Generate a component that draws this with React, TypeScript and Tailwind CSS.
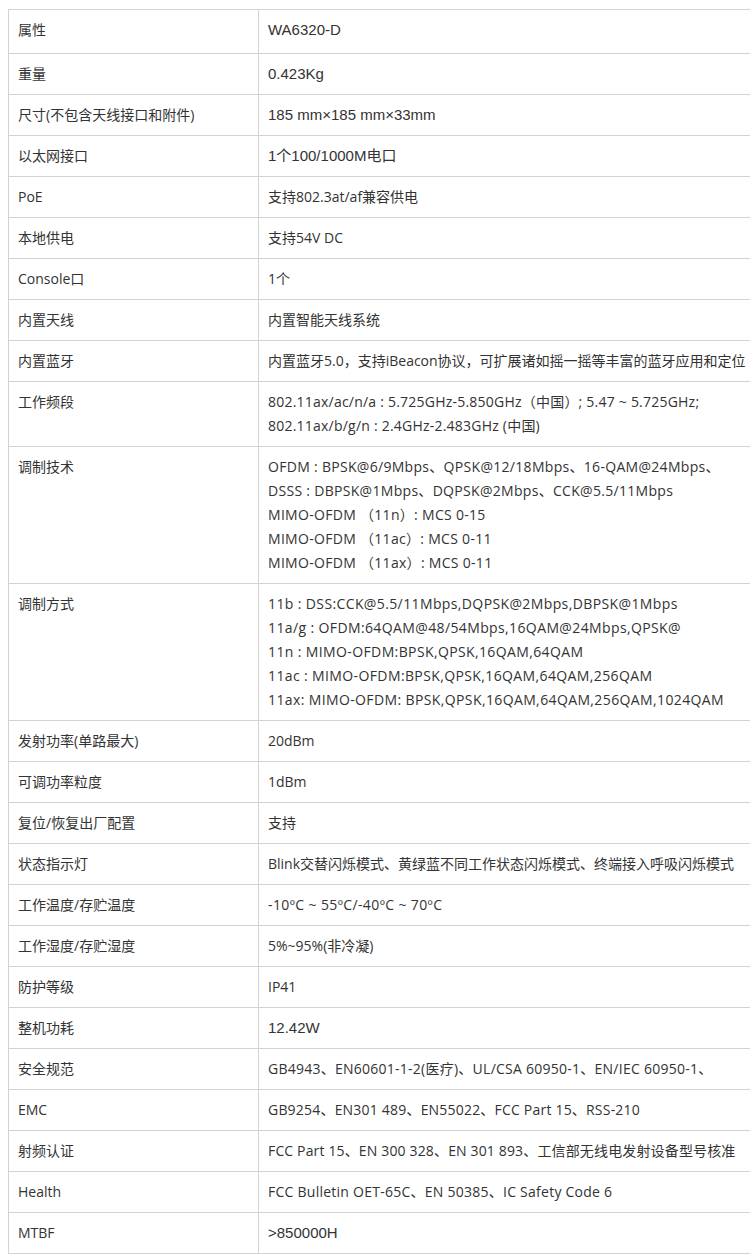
import React from 'react';

type Row = { label: string; lines: string[]; arial?: boolean; first?: boolean; wide?: string };

const rows: Row[] = [
  { label: '属性', lines: ['WA6320-D'], arial: true, first: true },
  { label: '重量', lines: ['0.423Kg'], arial: true },
  { label: '尺寸(不包含天线接口和附件)', lines: ['185 mm×185 mm×33mm'], arial: true },
  { label: '以太网接口', lines: ['1个100/1000M电口'], arial: true },
  { label: 'PoE', lines: ['支持802.3at/af兼容供电'] },
  { label: '本地供电', lines: ['支持54V DC'] },
  { label: 'Console口', lines: ['1个'] },
  { label: '内置天线', lines: ['内置智能天线系统'] },
  { label: '内置蓝牙', lines: ['内置蓝牙5.0，支持iBeacon协议，可扩展诸如摇一摇等丰富的蓝牙应用和定位'] },
  {
    label: '工作频段',
    lines: [
      '802.11ax/ac/n/a : 5.725GHz-5.850GHz（中国）; 5.47 ~ 5.725GHz;',
      '802.11ax/b/g/n : 2.4GHz-2.483GHz (中国)',
    ],
    wide: 'tracking-[0.22px]',
  },
  {
    label: '调制技术',
    lines: [
      'OFDM : BPSK@6/9Mbps、QPSK@12/18Mbps、16-QAM@24Mbps、',
      'DSSS : DBPSK@1Mbps、DQPSK@2Mbps、CCK@5.5/11Mbps',
      'MIMO-OFDM （11n）: MCS 0-15',
      'MIMO-OFDM （11ac）: MCS 0-11',
      'MIMO-OFDM （11ax）: MCS 0-11',
    ],
    wide: 'tracking-[0.3px]',
  },
  {
    label: '调制方式',
    lines: [
      '11b : DSS:CCK@5.5/11Mbps,DQPSK@2Mbps,DBPSK@1Mbps',
      '11a/g : OFDM:64QAM@48/54Mbps,16QAM@24Mbps,QPSK@',
      '11n : MIMO-OFDM:BPSK,QPSK,16QAM,64QAM',
      '11ac : MIMO-OFDM:BPSK,QPSK,16QAM,64QAM,256QAM',
      '11ax: MIMO-OFDM: BPSK,QPSK,16QAM,64QAM,256QAM,1024QAM',
    ],
    wide: 'tracking-[0.38px]',
  },
  { label: '发射功率(单路最大)', lines: ['20dBm'] },
  { label: '可调功率粒度', lines: ['1dBm'] },
  { label: '复位/恢复出厂配置', lines: ['支持'] },
  { label: '状态指示灯', lines: ['Blink交替闪烁模式、黄绿蓝不同工作状态闪烁模式、终端接入呼吸闪烁模式'] },
  { label: '工作温度/存贮温度', lines: ['-10ºC ~ 55ºC/-40ºC ~ 70ºC'], wide: 'tracking-[0.38px]' },
  { label: '工作湿度/存贮湿度', lines: ['5%~95%(非冷凝)'] },
  { label: '防护等级', lines: ['IP41'] },
  { label: '整机功耗', lines: ['12.42W'], arial: true },
  {
    label: '安全规范',
    lines: ['GB4943、EN60601-1-2(医疗)、UL/CSA 60950-1、EN/IEC 60950-1、'],
    wide: 'tracking-[0.25px]',
  },
  { label: 'EMC', lines: ['GB9254、EN301 489、EN55022、FCC Part 15、RSS-210'], wide: 'tracking-[0.2px]' },
  {
    label: '射频认证',
    lines: ['FCC Part 15、EN 300 328、EN 301 893、工信部无线电发射设备型号核准'],
    wide: 'tracking-[0.15px]',
  },
  {
    label: 'Health',
    lines: ['FCC Bulletin OET-65C、EN 50385、IC Safety Code 6'],
    wide: 'tracking-[0.25px]',
  },
  { label: 'MTBF', lines: ['>850000H'], arial: true },
];

const sans = "font-['Open_Sans','Noto_Sans_CJK_SC',sans-serif]";
const arial = "font-['Liberation_Sans','Noto_Sans_CJK_SC',sans-serif] text-[15px]";

export default function App() {
  return (
    <div className="w-[750px] h-[1260px] overflow-hidden bg-white pl-2 pt-[9px]">
      <div className="w-[770px] border-t border-l border-[#d3d3d3] text-[14px] leading-[24px] text-[#333]">
        {rows.map((r) => (
          <div
            key={r.label}
            className="grid grid-cols-[250px_1fr] border-b border-[#d3d3d3]"
          >
            <div
              className={`${sans} border-r border-[#d3d3d3] pl-[9px] whitespace-nowrap ${
                r.first ? 'pt-2 pb-[11px]' : 'py-2'
              }`}
            >
              {r.label}
            </div>
            <div
              className={`${r.arial ? arial : sans} ${r.wide ?? ''} pl-[9px] whitespace-nowrap ${
                r.first ? 'pt-2 pb-[11px]' : 'py-2'
              }`}
            >
              {r.lines.map((l, i) => (
                <div key={i}>{l}</div>
              ))}
            </div>
          </div>
        ))}
      </div>
    </div>
  );
}
